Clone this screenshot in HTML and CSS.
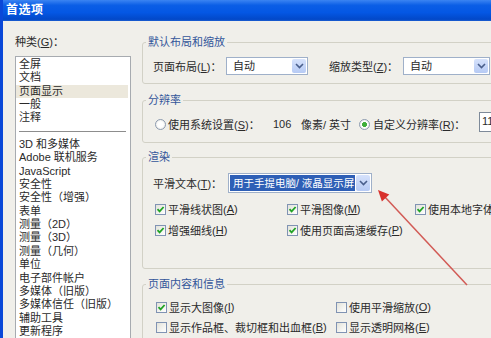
FILE: index.html
```html
<!DOCTYPE html>
<html>

<head>
    <meta charset="utf-8" />
    <title>首选项</title>
    <link rel="stylesheet" href="styles.css">
</head>

<body>
    <div class="window">
        <div class="titlebar">首选项</div>

        <div class="client">
            <div class="sidebar">
                <div class="cat-label">种类(<u>G</u>)：</div>
                <ul class="listbox">
                    <li>全屏</li>
                    <li>文档</li>
                    <li class="selected">页面显示</li>
                    <li>一般</li>
                    <li>注释</li>
                    <li class="sep"></li>
                    <li>3D 和多媒体</li>
                    <li>Adobe 联机服务</li>
                    <li>JavaScript</li>
                    <li>安全性</li>
                    <li>安全性（增强）</li>
                    <li>表单</li>
                    <li>测量（2D）</li>
                    <li>测量（3D）</li>
                    <li>测量（几何）</li>
                    <li>单位</li>
                    <li>电子部件帐户</li>
                    <li>多媒体（旧版）</li>
                    <li>多媒体信任（旧版）</li>
                    <li>辅助工具</li>
                    <li>更新程序</li>
                </ul>
            </div>

            <div class="panel">
                <fieldset class="group g-layout">
                    <legend>默认布局和缩放</legend>
                    <div class="row">
                        <span class="lbl w-layout">页面布局(<u>L</u>)：</span>
                        <span class="combo c-layout">
                            <span class="combo-text">自动</span>
                            <span class="combo-btn"><svg width="9" height="6" viewBox="0 0 9 6"><path d="M1 1 L4.5 4.5 L8 1" fill="none" stroke="#4a5f8c" stroke-width="1.6"/></svg></span>
                        </span>
                        <span class="lbl w-zoom">缩放类型(<u>Z</u>)：</span>
                        <span class="combo c-zoom">
                            <span class="combo-text">自动</span>
                            <span class="combo-btn"><svg width="9" height="6" viewBox="0 0 9 6"><path d="M1 1 L4.5 4.5 L8 1" fill="none" stroke="#4a5f8c" stroke-width="1.6"/></svg></span>
                        </span>
                    </div>
                </fieldset>

                <fieldset class="group g-res">
                    <legend>分辨率</legend>
                    <div class="row row-indent">
                        <span class="radio"></span>
                        <span class="lbl w-sys">使用系统设置(<u>S</u>)：</span>
                        <span class="w-val">106</span>
                        <span class="w-unit">像素/ 英寸</span>
                        <span class="radio on"></span>
                        <span class="lbl w-custom">自定义分辨率(<u>R</u>)：</span>
                        <span class="textbox">11</span>
                    </div>
                </fieldset>

                <fieldset class="group g-render">
                    <legend>渲染</legend>
                    <div class="row">
                        <span class="lbl w-smooth">平滑文本(<u>T</u>)：</span>
                        <span class="combo c-smooth">
                            <span class="combo-text picked">用于手提电脑/ 液晶显示屏</span>
                            <span class="combo-btn"><svg width="9" height="6" viewBox="0 0 9 6"><path d="M1 1 L4.5 4.5 L8 1" fill="none" stroke="#4a5f8c" stroke-width="1.6"/></svg></span>
                        </span>
                    </div>
                    <div class="checks render-checks first">
                        <span class="opt"><span class="check on"></span>平滑线状图(<u>A</u>)</span>
                        <span class="opt"><span class="check on"></span>平滑图像(<u>M</u>)</span>
                        <span class="opt"><span class="check on"></span>使用本地字体(<u>L</u>)</span>
                    </div>
                    <div class="checks render-checks second">
                        <span class="opt"><span class="check on"></span>增强细线(<u>H</u>)</span>
                        <span class="opt"><span class="check on"></span>使用页面高速缓存(<u>P</u>)</span>
                    </div>
                </fieldset>

                <fieldset class="group g-info">
                    <legend>页面内容和信息</legend>
                    <div class="checks info-checks">
                        <span class="opt"><span class="check on"></span>显示大图像(<u>I</u>)</span>
                        <span class="opt"><span class="check"></span>使用平滑缩放(<u>O</u>)</span>
                    </div>
                    <div class="checks info-checks second">
                        <span class="opt"><span class="check"></span>显示作品框、裁切框和出血框(<u>B</u>)</span>
                        <span class="opt"><span class="check"></span>显示透明网格(<u>E</u>)</span>
                    </div>
                </fieldset>
            </div>
        </div>

        <svg class="arrow" width="491" height="338" viewBox="0 0 491 338">
            <line x1="467" y1="285" x2="384" y2="196" stroke="#d25a55" stroke-width="1.5"/>
            <polygon points="378,190 389.3,194.6 381.9,201.5" fill="#d8312c"/>
        </svg>
    </div>
</body>

</html>
```

FILE: styles.css
```css
body {
    margin: 0;
    width: 491px;
    height: 338px;
    overflow: hidden;
    font-family: "Liberation Sans", "Noto Sans CJK SC", sans-serif;
    font-size: 11px;
    color: #2a2a2a;
}

.window {
    position: relative;
    height: 338px;
    border-left: 3px solid #0a48d8;
    background-color: #f0efea;
    overflow: hidden;
}

.titlebar {
    height: 21px;
    line-height: 20px;
    padding-left: 3px;
    color: #fff;
    font-size: 12px;
    font-weight: bold;
    letter-spacing: 0.5px;
    background: linear-gradient(#3b84f2 0%, #0b5ee6 25%, #0457e4 60%, #0248c8 92%, #1d5fd0 100%);
}

.client {
    display: flex;
    padding-left: 12px;
}

u {
    text-decoration: underline;
    text-underline-offset: 1px;
}

/* category list */

.sidebar {
    width: 116px;
    flex: none;
    padding-top: 14px;
}

.cat-label {
    line-height: 14px;
}

.listbox {
    list-style: none;
    margin: 7px 0 0 0;
    padding: 1px 0 0 0;
    height: 300px;
    background-color: #fff;
    border: 1px solid #a7abb0;
}

.listbox li {
    height: 13.35px;
    line-height: 13.35px;
    padding-left: 3px;
    margin-right: 2px;
    white-space: nowrap;
}

.listbox li.selected {
    background-color: #ece8dc;
}

.listbox li.sep {
    display: flex;
    align-items: center;
    padding: 0 2px 0 3px;
}

.listbox li.sep::after {
    content: "";
    flex: 1;
    border-top: 1px solid #8d8d8d;
}

/* option groups */

.panel {
    width: 390px;
    flex: none;
    margin-left: 11px;
    padding-top: 14px;
}

.group {
    margin: 0;
    padding: 0 0 0 10px;
    border: 1px solid #d2d1c6;
    border-radius: 3px;
    min-width: 0;
}

.group legend {
    line-height: 14px;
    margin-left: -7px;
    padding: 0 2px;
    color: #34569a;
}

.g-layout {
    padding-top: 8px;
    padding-bottom: 8px;
}

.g-res {
    margin-top: 9px;
    padding-top: 9px;
    padding-bottom: 10px;
}

.g-render {
    margin-top: 7px;
    padding-top: 9px;
    padding-bottom: 30px;
}

.g-info {
    margin-top: 8px;
    padding-top: 8px;
    padding-bottom: 10px;
}

.row {
    display: flex;
    align-items: center;
    white-space: nowrap;
}

.g-layout .row {
    height: 18px;
}

.g-res .row {
    height: 16px;
}

.g-render .row {
    height: 19px;
}

.row-indent {
    padding-left: 2px;
}

.w-layout { width: 73px; }
.w-zoom { width: 74px; margin-left: 21px; }
.w-sys { width: 105px; margin-left: 2px; }
.w-val { width: 28px; }
.w-unit { width: 58px; }
.w-custom { width: 106px; margin-left: 3px; }
.w-smooth { width: 75px; }

/* combo boxes */

.combo {
    display: flex;
    align-items: center;
    box-sizing: border-box;
    background-color: #fff;
    border: 1px solid #9fb0c9;
    padding: 1px;
}

.c-layout {
    width: 82px;
    height: 18px;
}

.c-zoom {
    width: 87px;
    height: 18px;
}

.c-smooth {
    width: 144px;
    height: 20px;
}

.combo-text {
    flex: 1;
    padding-left: 5px;
    line-height: 14px;
}

.combo-text.picked {
    align-self: stretch;
    overflow: hidden;
    margin-right: 1px;
    padding-left: 3px;
    font-size: 10.5px;
    line-height: 16px;
    color: #fff;
    background-color: #2e5fb6;
}

.combo-btn {
    width: 14px;
    flex: none;
    align-self: stretch;
    display: flex;
    align-items: center;
    justify-content: center;
    border-radius: 2px;
    background: linear-gradient(#d6e2fb, #b6caf4);
}

.textbox {
    box-sizing: border-box;
    height: 20px;
    width: 40px;
    margin-top: -4px;
    padding: 2px 0 0 2px;
    border: 1px solid #7e8a99;
    background-color: #fff;
}

/* radios and checks */

.radio {
    width: 11px;
    height: 11px;
    flex: none;
    box-sizing: border-box;
    border-radius: 50%;
    border: 1px solid #8d9bb0;
    background: radial-gradient(#ffffff 40%, #e3e3dc);
}

.radio.on {
    background: radial-gradient(#3fae3a 0 2.2px, #ffffff 2.8px 45%, #e3e3dc);
}

.checks {
    display: grid;
    align-items: center;
    height: 16px;
    padding-left: 2px;
    white-space: nowrap;
}

.render-checks {
    grid-template-columns: 132px 128px auto;
}

.render-checks.first {
    margin-top: 9px;
}

.render-checks.second {
    margin-top: 5px;
}

.info-checks {
    grid-template-columns: 180px auto;
    padding-left: 3px;
}

.info-checks.second {
    margin-top: 4px;
}

.opt {
    display: flex;
    align-items: center;
}

.check {
    width: 11px;
    height: 11px;
    flex: none;
    box-sizing: border-box;
    margin-right: 2px;
    border: 1px solid #8093b3;
    background: linear-gradient(135deg, #e2e2da, #ffffff);
}

.check.on {
    background:
        url("data:image/svg+xml,%3Csvg xmlns='http://www.w3.org/2000/svg' width='9' height='9' viewBox='0 0 9 9'%3E%3Cpath d='M1.5 4.2 L3.6 6.4 L7.6 2' fill='none' stroke='%2321a325' stroke-width='1.8'/%3E%3C/svg%3E") center / 9px 9px no-repeat,
        linear-gradient(135deg, #e2e2da, #ffffff);
}

.arrow {
    position: absolute;
    left: -3px;
    top: 0;
    pointer-events: none;
}
```
